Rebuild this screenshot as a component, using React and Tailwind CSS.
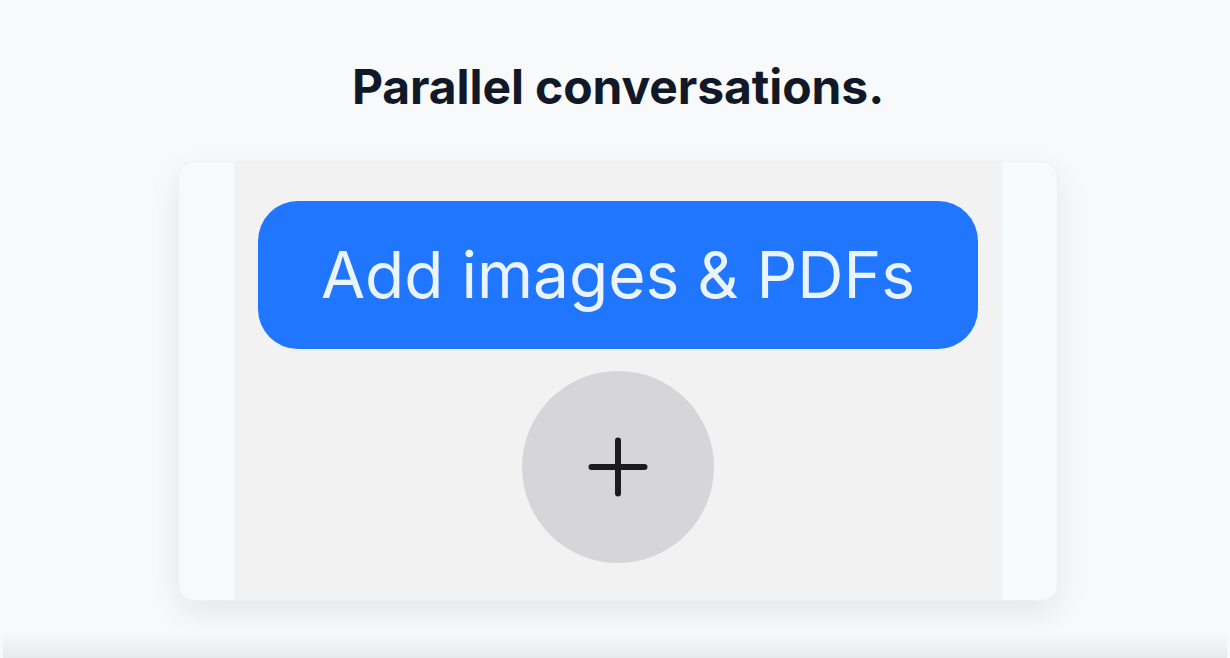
export default function App() {
  return (
    <div
      className="w-[1230px] h-[658px] bg-[#f8f9fb] flex flex-col items-center overflow-hidden pl-[6px]"
      style={{ fontFamily: "Inter, 'Noto Sans', sans-serif" }}
    >
      <h1 className="mt-[58px] text-[48px] leading-[58px] font-bold tracking-[-0.1px] text-[#111827]">
        Parallel conversations.
      </h1>
      <div className="mt-[45px] w-[880px] h-[440px] shrink-0 rounded-[16px] bg-[#f8f9fa] border border-[#eeeff1] shadow-[0_12px_32px_rgba(0,0,0,0.08)] flex justify-center overflow-hidden">
        <div className="w-[768px] h-full bg-[#f2f2f2] flex flex-col items-center pt-[39px]">
          <div className="w-[720px] h-[148px] shrink-0 rounded-[40px] bg-[#2176ff] flex items-center justify-center">
            <span className="text-[64px] leading-none text-[#eaf4ff] font-normal">
              Add images &amp; PDFs
            </span>
          </div>
          <div className="mt-[22px] w-[192px] h-[192px] shrink-0 rounded-full bg-[#d6d6d8] flex items-center justify-center">
            <svg width="60" height="60" viewBox="0 0 60 60" fill="none">
              <path d="M30 3.5v53M3.5 30h53" stroke="#1c1c1e" strokeWidth="6" strokeLinecap="round" />
            </svg>
          </div>
        </div>
      </div>
      <div className="mt-auto w-full h-[26px] -ml-[6px] w-[1230px] bg-gradient-to-b from-[#f8f9fb] to-[#e8e9eb]" />
    </div>
  );
}
